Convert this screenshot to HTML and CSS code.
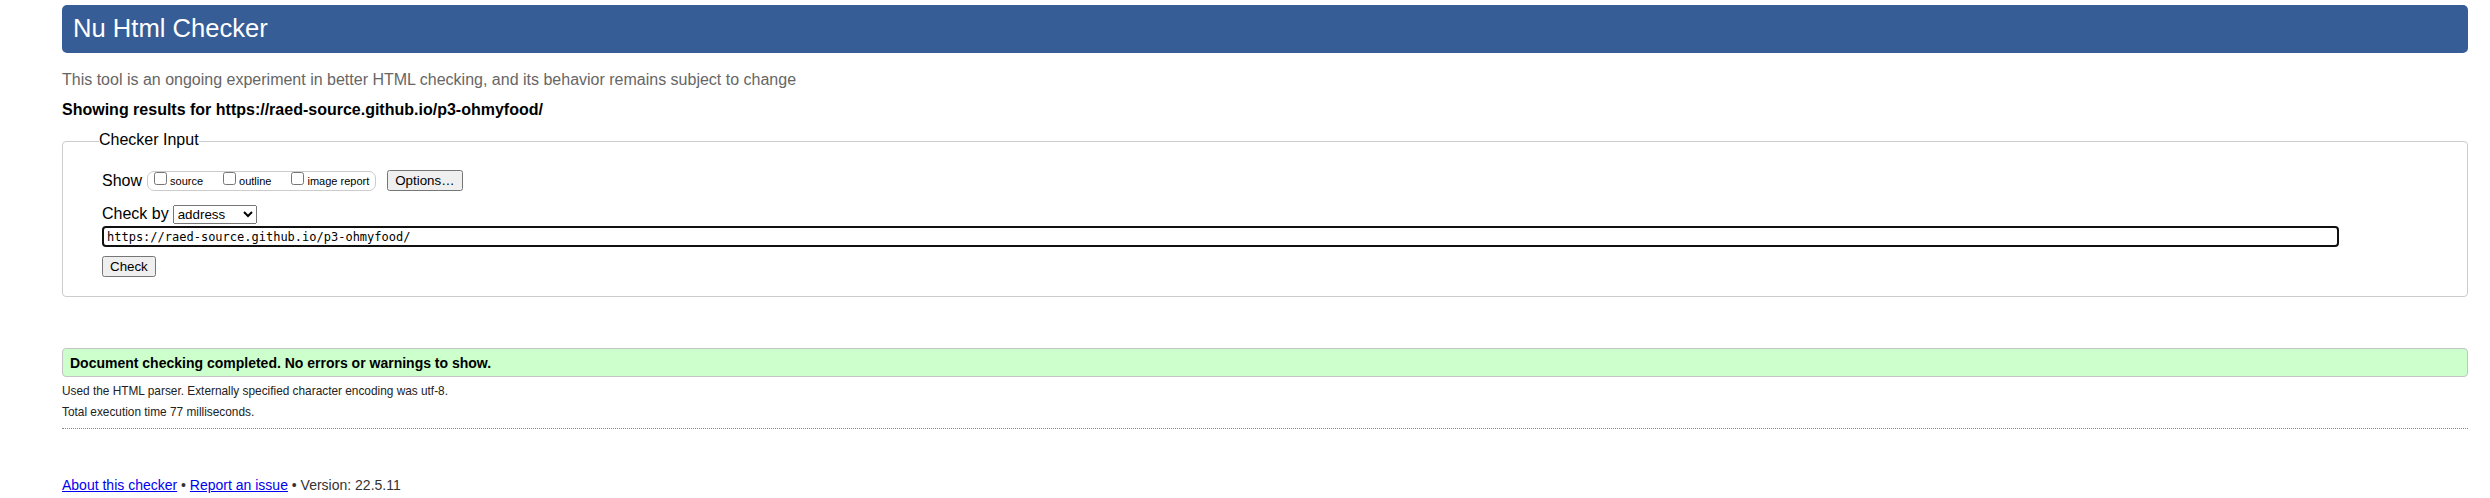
FILE: index.html
```html
<!DOCTYPE html>
<html lang="en">
<head>
<meta charset="utf-8">
<title>Showing results for https://raed-source.github.io/p3-ohmyfood/ - Nu Html Checker</title>
<link rel="stylesheet" href="styles.css">
</head>
<body>
<h1 class="title">Nu Html Checker</h1>
<p class="subtitle">This tool is an ongoing experiment in better HTML checking, and its behavior remains subject to change</p>
<p class="showing">Showing results for https://raed-source.github.io/p3-ohmyfood/</p>

<fieldset class="checker">
  <legend class="checker-legend">Checker Input</legend>
  <div class="row row-show">
    <span class="row-label">Show</span>
    <span class="show-options">
      <label class="opt"><input type="checkbox" class="cb">source</label>
      <label class="opt"><input type="checkbox" class="cb">outline</label>
      <label class="opt"><input type="checkbox" class="cb">image report</label>
    </span>
    <button type="button" class="btn btn-options">Options…</button>
  </div>
  <div class="row row-by">
    <span class="row-label">Check by</span>
    <select class="by-select">
      <option>address</option>
      <option>file upload</option>
      <option>text input</option>
    </select>
  </div>
  <div class="url-wrap">
    <input type="url" class="url" value="https://raed-source.github.io/p3-ohmyfood/">
  </div>
  <div class="row row-submit">
    <button type="submit" class="btn">Check</button>
  </div>
</fieldset>

<p class="success">Document checking completed. No errors or warnings to show.</p>
<p class="details">Used the HTML parser. Externally specified character encoding was utf-8.</p>
<p class="details">Total execution time 77 milliseconds.</p>
<hr class="sep">

<p class="footer"><a href="#about">About this checker</a> • <a href="#issue">Report an issue</a> • Version: 22.5.11</p>
</body>
</html>
```

FILE: styles.css
```css
html, body {
  background: #fff;
}

body {
  margin: 0;
  padding: 5px 22px 0 62px;
  font-family: "Liberation Sans", Arial, sans-serif;
  font-size: 16px;
  color: #000;
}

.title {
  margin: 0;
  height: 48px;
  box-sizing: border-box;
  padding: 0 0 2px 11px;
  line-height: 46px;
  font-size: 25.6px;
  font-weight: normal;
  color: #fff;
  background: #365d95;
  border-radius: 5px;
}

.subtitle {
  margin: 17px 0 0;
  line-height: 20px;
  color: #666;
}

.showing {
  margin: 10px 0 0;
  line-height: 20px;
  font-weight: bold;
  color: #000;
}

.checker {
  margin: 10px 0 0;
  padding: 18px 10px 19px 39px;
  border: 1px solid #ccc;
  border-radius: 4px;
  min-width: 0;
}

.checker-legend {
  padding: 0 0 2px;
  margin-left: -3px;
  line-height: 20px;
  font-size: 16px;
  color: #000;
}

.row {
  display: flex;
  align-items: center;
}

.row-show {
  height: 21px;
}

.row-label {
  line-height: 20px;
}

.show-options {
  display: flex;
  align-items: baseline;
  gap: 20px;
  margin-left: 5px;
  padding: 0 6px;
  border: 1px solid #ccc;
  border-radius: 7px;
  font-size: 11px;
  line-height: 17px;
  white-space: nowrap;
}

.cb {
  width: 13px;
  height: 13px;
  margin: 0 3px 0 0;
  vertical-align: baseline;
}

.btn {
  font-family: "Liberation Sans", Arial, sans-serif;
  font-size: 13.333px;
}

.btn-options {
  margin-left: 11px;
}

.row-by {
  margin-top: 13px;
  height: 20px;
}

.by-select {
  margin-left: 4px;
  width: 84px;
  height: 19px;
  font-family: "Liberation Sans", Arial, sans-serif;
  font-size: 13.333px;
}

.url-wrap {
  margin-top: 2px;
  margin-right: 118px;
}

.url {
  display: block;
  width: 100%;
  height: 21px;
  box-sizing: border-box;
  padding: 0 3px;
  border: 2px solid #101010;
  border-radius: 4px;
  font-family: "DejaVu Sans Mono", "Liberation Mono", monospace;
  font-size: 12px;
  color: #000;
  outline: none;
}

.row-submit {
  margin-top: 9px;
}

.success {
  margin: 51px 0 0;
  height: 29px;
  box-sizing: border-box;
  padding: 1px 0 0 7px;
  line-height: 26px;
  font-size: 14px;
  font-weight: bold;
  background: #ccffcc;
  border: 1px solid #c4c4c4;
  border-radius: 4px;
}

.details {
  margin: 0;
  line-height: 21px;
  font-size: 11.85px;
  color: #222;
}

.success + .details {
  margin-top: 4px;
}

.sep {
  margin: 5px 0 0;
  height: 0;
  border: 0;
  border-top: 1px dotted #888;
}

.footer {
  margin: 48px 0 0;
  line-height: 16px;
  font-size: 14px;
  color: #333;
}

.footer a {
  color: #0000ee;
  text-decoration: underline;
}
```
